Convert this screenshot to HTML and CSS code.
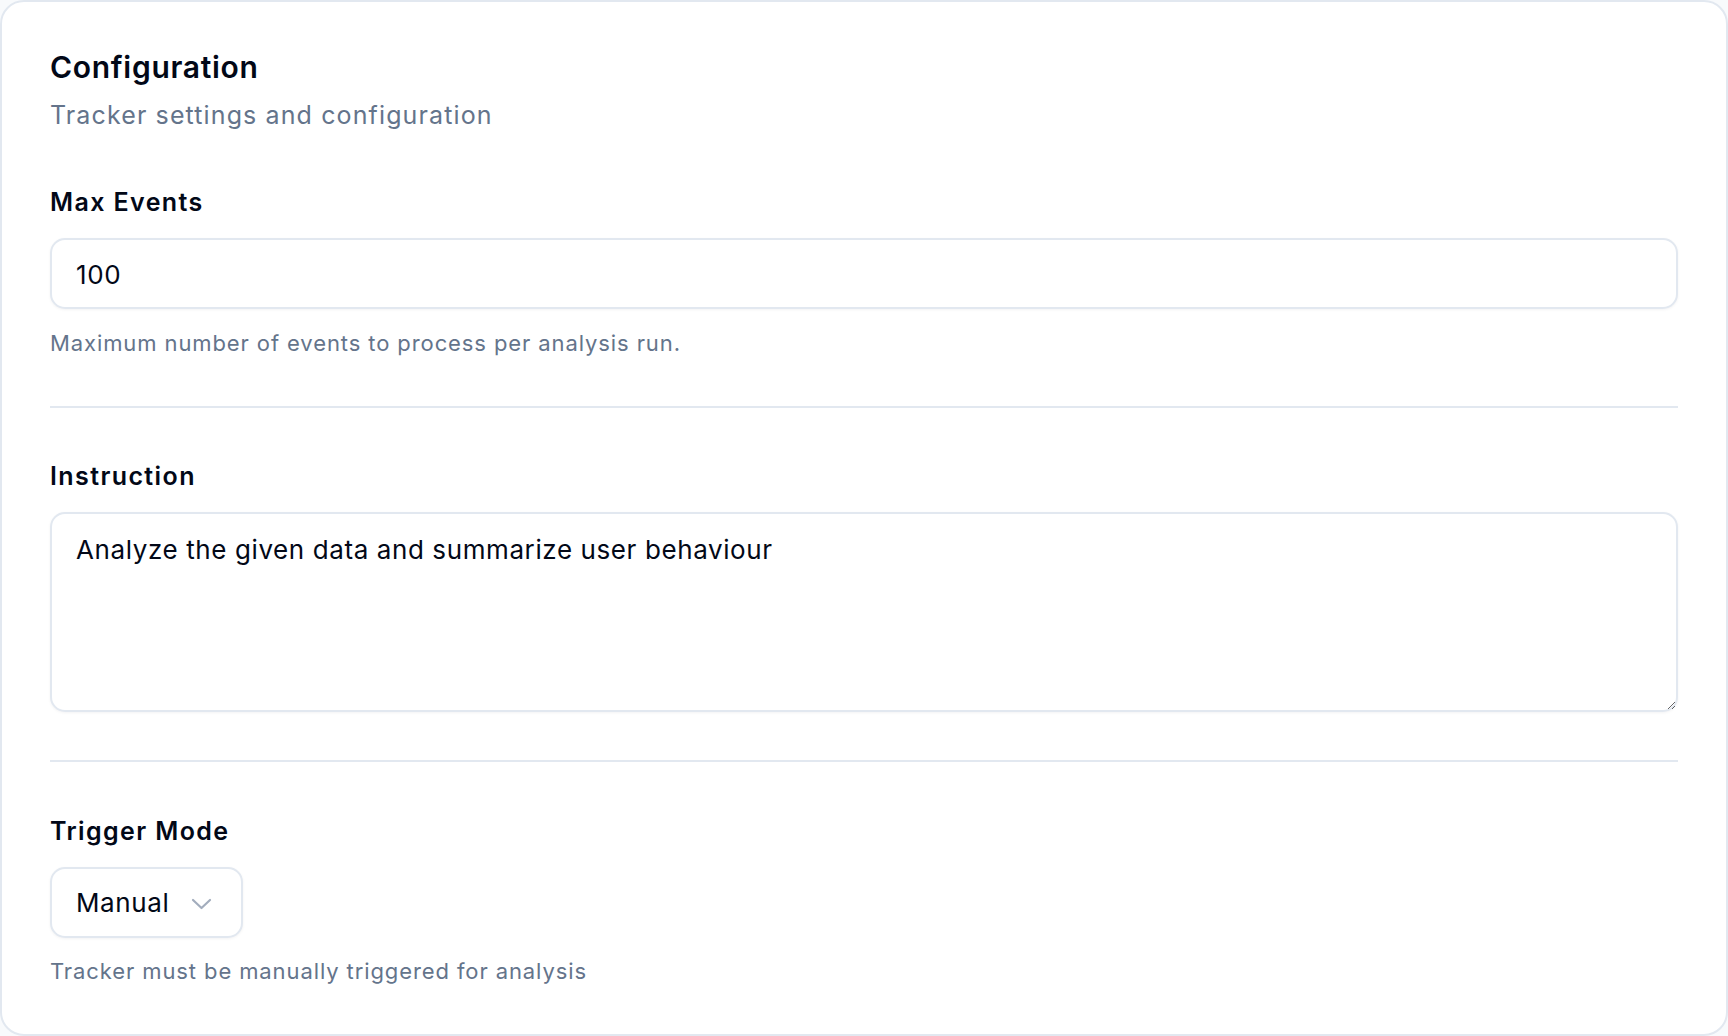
FILE: index.html
```html
<!DOCTYPE html>
<html lang="en">
<head>
  <meta charset="UTF-8"/>
  <meta name="viewport" content="width=device-width, initial-scale=1.0"/>
  <title>Tracker Configuration</title>
  <link rel="stylesheet" href="styles.css">
</head>
<body>

  <div class="card">
    <div class="card-header">
      <h2>Configuration</h2>
      <p class="subtitle">Tracker settings and configuration</p>
    </div>

    <div class="field">
      <label for="maxEvents">Max Events</label>
      <input type="text" id="maxEvents" value="100" />
      <p class="help">Maximum number of events to process per analysis run.</p>
    </div>

    <div class="field">
      <label for="instruction">Instruction</label>
      <textarea id="instruction">Analyze the given data and summarize user behaviour</textarea>
    </div>

    <div class="field last">
      <label>Trigger Mode</label>
      <button type="button" class="select">
        <span>Manual</span>
        <svg width="21" height="12" viewBox="0 0 21 12" fill="none" stroke="currentColor" stroke-width="2.2" stroke-linecap="round" stroke-linejoin="round"><path d="M2 2l8.5 8 8.5-8"/></svg>
      </button>
      <p class="help">Tracker must be manually triggered for analysis</p>
    </div>
  </div>

</body>
</html>
```

FILE: styles.css
```css
* {
  box-sizing: border-box;
}
body {
  margin: 0;
  background: #f8fafc;
  font-family: Inter, 'Noto Sans', sans-serif;
  color: #020817;
}
.card {
  background: #fff;
  border: 2px solid #e2e8f0;
  border-radius: 24px;
  min-height: 100vh;
  padding: 49px 48px 44px;
}
.card-header h2 {
  margin: 0;
  font-size: 30px;
  line-height: 32px;
  font-weight: 600;
  letter-spacing: 0.7px;
}
.subtitle {
  margin: 14px 0 0;
  font-size: 25px;
  line-height: 36px;
  letter-spacing: 1.12px;
  color: #64748b;
}
.field {
  padding: 53px 0 48px;
  border-bottom: 2px solid #e2e8f0;
}
.field + .field {
  padding-top: 52px;
}
.field.last {
  border-bottom: none;
  padding-top: 53px;
  padding-bottom: 0;
}
label {
  display: block;
  font-size: 25px;
  line-height: 32px;
  font-weight: 600;
  letter-spacing: 1.4px;
  margin-bottom: 20px;
}
input, textarea, .select {
  font-family: inherit;
  font-size: 26px;
  letter-spacing: 0.6px;
  color: #020817;
  background: #fff;
  border: 2px solid #e2e8f0;
  border-radius: 15px;
  box-shadow: 0 1px 3px rgba(15, 23, 42, 0.05);
  outline: none;
}
input {
  display: block;
  width: 100%;
  height: 71px;
  padding: 2px 24px 0;
}
textarea {
  display: block;
  width: 100%;
  height: 200px;
  padding: 18px 24px;
  line-height: 36px;
  resize: vertical;
}
.select {
  display: flex;
  align-items: center;
  gap: 22px;
  height: 71px;
  padding: 0 29px 0 24px;
  cursor: pointer;
}
.select svg {
  color: #a3adbd;
  margin-top: 2px;
}
.help {
  margin: 19px 0 0;
  font-size: 22px;
  line-height: 30px;
  letter-spacing: 0.9px;
  color: #64748b;
}
.field.last .help {
  margin-top: 18px;
}
```
